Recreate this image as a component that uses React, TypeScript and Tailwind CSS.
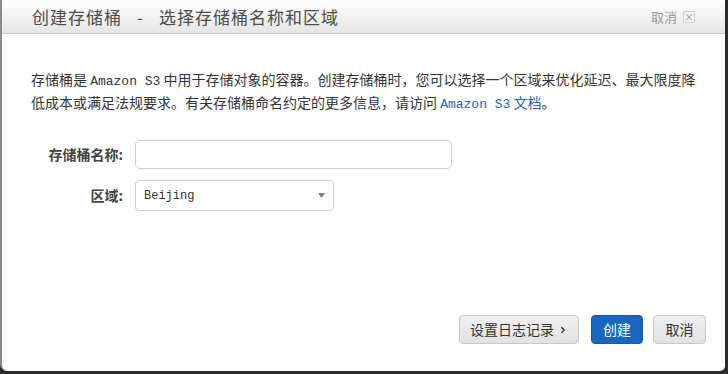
import { ChevronRight } from "lucide-react";

const cjk = "font-['Noto_Sans_CJK_SC','Noto_Sans',sans-serif]";
const mono = "font-['Liberation_Mono','DejaVu_Sans_Mono',monospace]";

function GreyButton({ children, className = "" }: { children: React.ReactNode; className?: string }) {
  return (
    <button
      className={`h-[29px] rounded-[4px] border border-[#c8c8c8] bg-gradient-to-b from-[#f0f0f0] to-[#e2e2e2] text-[14px] text-[#333] flex items-center justify-center ${className}`}
    >
      {children}
    </button>
  );
}

export default function App() {
  return (
    <div className={`w-[728px] h-[374px] bg-[#2b2b2b] overflow-hidden ${cjk}`}>
      <div className="w-[725px] h-[371px] bg-white border-l-2 border-[#8a8a8a] rounded-bl-[7px] rounded-br-[5px] flex flex-col">
        {/* header */}
        <div className="h-[34px] shrink-0 flex items-center justify-between bg-gradient-to-b from-white to-[#e5e5e5] border-b border-[#c9c9c9] pl-[30px] pr-[30px]">
          <h1 className="flex items-center text-[17px] tracking-[1px] text-[#4d4d4d] font-normal">
            <span>创建存储桶</span>
            <span className="mx-[15px]">-</span>
            <span>选择存储桶名称和区域</span>
          </h1>
          <div className="flex items-center gap-[6px] text-[13px] text-[#9a9a9a]">
            <span>取消</span>
            <span className="w-[12px] h-[12px] border border-[#cfcfcf] bg-[#f3f3f3] flex items-center justify-center text-[10px] leading-none text-[#999]">
              ×
            </span>
          </div>
        </div>

        {/* description */}
        <p className="pt-[35px] pl-[29px] pr-[20px] text-[14px] leading-[21px] text-[#333]">
          存储桶是 <span className={`${mono} text-[13px]`}>Amazon S3</span> 中用于存储对象的容器。创建存储桶时，您可以选择一个区域来优化延迟、最大限度降
          <br />
          低成本或满足法规要求。有关存储桶命名约定的更多信息，请访问{" "}
          <a className="text-[#1f66b7]">
            <span className={`${mono} text-[13px]`}>Amazon S3</span> 文档
          </a>
          。
        </p>

        {/* form */}
        <div className="mt-[25px] flex flex-col gap-[11px]">
          <div className="flex items-center">
            <label className="w-[121px] text-right text-[14px] font-bold text-[#444]">存储桶名称:</label>
            <input className="ml-[12px] w-[317px] h-[29px] rounded-[5px] border border-[#cccccc] bg-white outline-none" />
          </div>
          <div className="flex items-center">
            <label className="w-[121px] text-right text-[14px] font-bold text-[#444]">区域:</label>
            <div className="ml-[12px] w-[199px] h-[31px] rounded-[4px] border border-[#cccccc] bg-white flex items-center justify-between pl-[8px] pr-[8px]">
              <span className={`${mono} text-[12px] text-[#333]`}>Beijing</span>
              <svg width="7" height="5" viewBox="0 0 7 5">
                <path d="M0 0h7L3.5 5z" fill="#808080" />
              </svg>
            </div>
          </div>
        </div>

        {/* footer buttons */}
        <div className="mt-auto mb-[27px] flex justify-end items-center pr-[19px]">
          <GreyButton className="w-[120px] gap-[4px]">
            设置日志记录
            <ChevronRight className="w-[10px] h-[10px] text-[#333]" strokeWidth={3} />
          </GreyButton>
          <button className="ml-[12px] w-[52px] h-[29px] rounded-[4px] bg-[#1a67bf] border border-[#155aa8] text-white text-[14px] flex items-center justify-center">
            创建
          </button>
          <GreyButton className="ml-[10px] w-[53px]">取消</GreyButton>
        </div>
      </div>
    </div>
  );
}
